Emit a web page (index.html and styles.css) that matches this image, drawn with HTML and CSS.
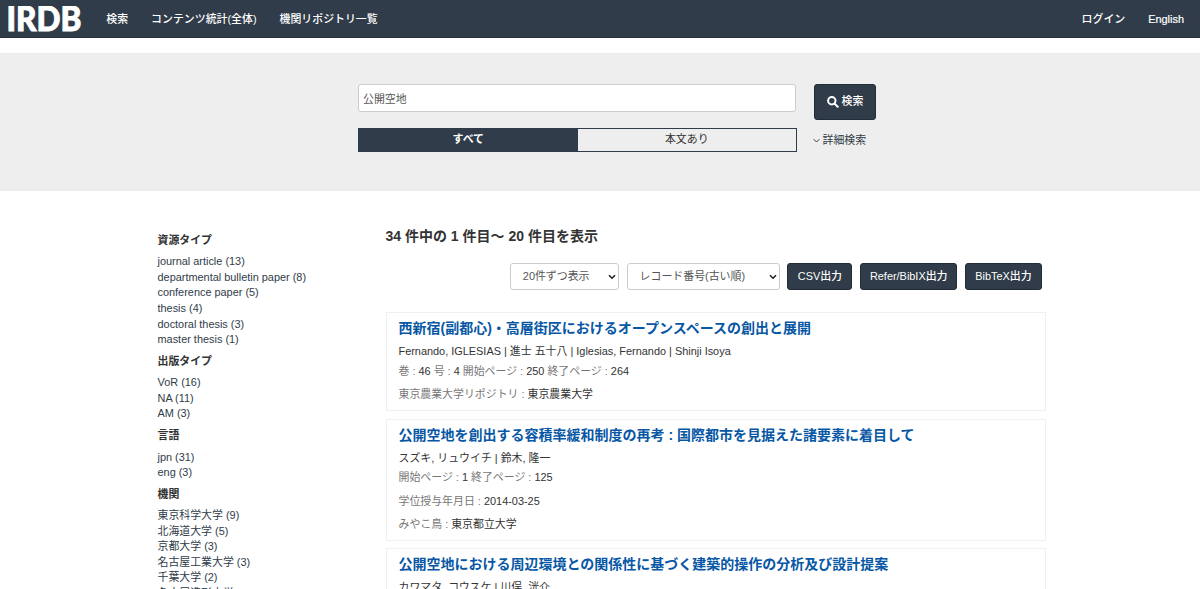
FILE: index.html
```html
<!DOCTYPE html>
<html lang="ja">
<head>
    <meta charset="UTF-8">
    <meta name="viewport" content="width=device-width, initial-scale=1.0">
    <title>IRDB</title>
    <link rel="stylesheet" href="styles.css">
</head>
<body>
    <header class="navbar">
        <a href="#" class="logo">
            <svg width="76" height="32" viewBox="0 0 76 32"><text x="-1.5" y="24.6" textLength="75" lengthAdjust="spacingAndGlyphs">IRDB</text></svg>
        </a>
        <nav class="menu">
            <a href="#">検索</a>
            <a href="#">コンテンツ統計(全体)</a>
            <a href="#">機関リポジトリ一覧</a>
        </nav>
        <nav class="menu menu-right">
            <a href="#">ログイン</a>
            <a href="#" class="lang">English</a>
        </nav>
    </header>

    <!-- Search box -->
    <form class="search">
        <div class="search-main">
            <input type="text" class="keyword" value="公開空地">
            <div class="tabs">
                <a href="#" class="tab active">すべて</a>
                <a href="#" class="tab">本文あり</a>
            </div>
        </div>
        <div class="search-side">
            <button type="button" class="search-button">
                <svg width="12" height="12" viewBox="0 0 12 12"><circle cx="4.8" cy="4.8" r="3.7"/><path d="M7.6 7.6L10.7 10.7"/></svg>
                <span>検索</span>
            </button>
            <a href="#" class="detail">
                <svg width="7" height="6" viewBox="0 0 7 6"><path d="M.7 1.2L3.5 4L6.3 1.2"/></svg>
                <span>詳細検索</span>
            </a>
        </div>
    </form>

    <div class="container">
        <aside class="facets">
            <h4>資源タイプ</h4>
            <ul>
                <li><a href="#">journal article (13)</a></li>
                <li><a href="#">departmental bulletin paper (8)</a></li>
                <li><a href="#">conference paper (5)</a></li>
                <li><a href="#">thesis (4)</a></li>
                <li><a href="#">doctoral thesis (3)</a></li>
                <li><a href="#">master thesis (1)</a></li>
            </ul>
            <h4>出版タイプ</h4>
            <ul>
                <li><a href="#">VoR (16)</a></li>
                <li><a href="#">NA (11)</a></li>
                <li><a href="#">AM (3)</a></li>
            </ul>
            <h4>言語</h4>
            <ul>
                <li><a href="#">jpn (31)</a></li>
                <li><a href="#">eng (3)</a></li>
            </ul>
            <h4>機関</h4>
            <ul>
                <li><a href="#">東京科学大学 (9)</a></li>
                <li><a href="#">北海道大学 (5)</a></li>
                <li><a href="#">京都大学 (3)</a></li>
                <li><a href="#">名古屋工業大学 (3)</a></li>
                <li><a href="#">千葉大学 (2)</a></li>
                <li><a href="#">名古屋造形大学 (2)</a></li>
            </ul>
        </aside>

        <main class="results">
            <h3>34 件中の 1 件目～ 20 件目を表示</h3>
            <div class="tools">
                <div class="select size">
                    <span>20件ずつ表示</span>
                    <svg width="8" height="6" viewBox="0 0 8 6"><path d="M1 1.2L4 4.2L7 1.2"/></svg>
                </div>
                <div class="select sort">
                    <span>レコード番号(古い順)</span>
                    <svg width="8" height="6" viewBox="0 0 8 6"><path d="M1 1.2L4 4.2L7 1.2"/></svg>
                </div>
                <a href="#" class="button csv">CSV出力</a>
                <a href="#" class="button refer">Refer/BibIX出力</a>
                <a href="#" class="button bibtex">BibTeX出力</a>
            </div>

            <div class="item">
                <a href="#" class="title">西新宿(副都心)・高層街区におけるオープンスペースの創出と展開</a>
                <p class="author">Fernando, IGLESIAS | 進士 五十八 | Iglesias, Fernando | Shinji Isoya</p>
                <p>巻 : <b>46</b> 号 : <b>4</b> 開始ページ : <b>250</b> 終了ページ : <b>264</b></p>
                <p>東京農業大学リポジトリ : <b>東京農業大学</b></p>
            </div>
            <div class="item">
                <a href="#" class="title">公開空地を創出する容積率緩和制度の再考 : 国際都市を見据えた諸要素に着目して</a>
                <p class="author">スズキ, リュウイチ | 鈴木, 隆一</p>
                <p>開始ページ : <b>1</b> 終了ページ : <b>125</b></p>
                <p>学位授与年月日 : <b>2014-03-25</b></p>
                <p>みやこ鳥 : <b>東京都立大学</b></p>
            </div>
            <div class="item">
                <a href="#" class="title">公開空地における周辺環境との関係性に基づく建築的操作の分析及び設計提案</a>
                <p class="author">カワマタ, コウスケ | 川俣, 洸介</p>
            </div>
        </main>
    </div>
</body>
</html>
```

FILE: styles.css
```css
* {
    margin: 0;
    padding: 0;
    box-sizing: border-box;
}

body {
    height: 589px;
    overflow: hidden;
    color: #333;
    background: #fff;
    font: 10.92px/15.56px "Liberation Sans", "Noto Sans CJK JP", sans-serif;
}

a {
    color: inherit;
    text-decoration: none;
}

ul {
    list-style: none;
}

svg {
    display: block;
    fill: none;
    stroke: currentColor;
}

.navbar {
    display: flex;
    height: 38px;
    padding: 0 16px 0 8px;
    color: #fff;
    background: #303c49;
    border-bottom: 1px solid #25303b;
}

.logo {
    width: 98.3px;
    padding-top: 6px;
}

.logo text {
    font: 900 33.5px Lato, sans-serif;
    fill: #fff;
    stroke: #fff;
    stroke-width: .9px;
}

.menu {
    display: flex;
    gap: 23px;
    padding-top: 12px;
    font-weight: 500;
}

.menu-right {
    margin-left: auto;
}

.lang {
    -webkit-text-stroke: .2px #fff;
}

.search {
    display: flex;
    gap: 17px;
    height: 138px;
    margin-top: 15px;
    padding: 30px 0 0 358px;
    background: #eee;
    border-bottom: 1px solid #ebebeb;
    border-top: 1px solid #ebebeb;
}

.search-main {
    width: 439px;
}

.keyword {
    display: block;
    width: 438px;
    height: 28px;
    padding: 0 4px;
    color: #555;
    background: #fff;
    border: 1px solid #ccc;
    border-radius: 3px;
    font: inherit;
}

.tabs {
    display: flex;
    height: 24px;
    margin-top: 16px;
    border: 1px solid #303c49;
}

.tab {
    flex: 1;
    text-align: center;
    line-height: 21px;
}

.tab.active {
    color: #fff;
    background: #303c49;
    font-weight: 700;
}

.search-button {
    display: flex;
    align-items: center;
    justify-content: center;
    gap: 3px;
    width: 62px;
    height: 36px;
    padding-bottom: 1px;
    color: #fff;
    background: #303c49;
    border: 1px solid #222d38;
    border-radius: 3px;
    font: inherit;
    font-weight: 500;
}

.search-button svg {
    stroke-width: 2;
    stroke-linecap: round;
}

.detail {
    display: flex;
    align-items: center;
    gap: 3px;
    margin-top: 13px;
    margin-left: -1.5px;
    color: #303c49;
}

.container {
    display: flex;
    padding: 0 154px 0 157.5px;
}

.facets {
    width: 228px;
    padding-top: 42px;
    color: #303c49;
}

.facets h4 {
    margin-bottom: 5.8px;
    color: #333;
    font-size: 10.92px;
}

.facets ul {
    margin-bottom: 6.2px;
}

.results {
    flex: 1;
}

.results h3 {
    padding-top: 35px;
    font-size: 14px;
    line-height: 20px;
}

.tools {
    display: flex;
    justify-content: flex-end;
    gap: 7.8px;
    margin: 17px 4px 22.3px 0;
}

.select {
    display: flex;
    align-items: center;
    justify-content: space-between;
    height: 27px;
    padding: 0 2px 0 12px;
    color: #555;
    border: 1px solid #ccc;
    border-radius: 3px;
}

.select svg {
    color: #222;
    stroke-width: 1.6;
}

.size {
    width: 109px;
}

.sort {
    width: 153px;
}

.button {
    height: 27px;
    color: #fff;
    background: #303c49;
    border: 1px solid #222d38;
    border-radius: 3px;
    font-weight: 500;
    text-align: center;
    line-height: 24px;
}

.csv {
    width: 65px;
}

.refer {
    width: 97px;
}

.bibtex {
    width: 77px;
}

.item {
    margin-bottom: 7.6px;
    padding: 5px 12px 7.3px;
    border: 1px solid #f0f0f0;
}

.title {
    display: block;
    color: #0757a5;
    font-size: 14px;
    font-weight: 700;
    line-height: 20px;
}

.item p {
    margin-bottom: 7.6px;
    color: #777;
}

.item p:last-child {
    margin-bottom: 0;
}

.item b {
    color: #333;
    font-weight: 400;
}

.item .author {
    margin: 6.2px 0 4px;
    color: #333;
}
```
